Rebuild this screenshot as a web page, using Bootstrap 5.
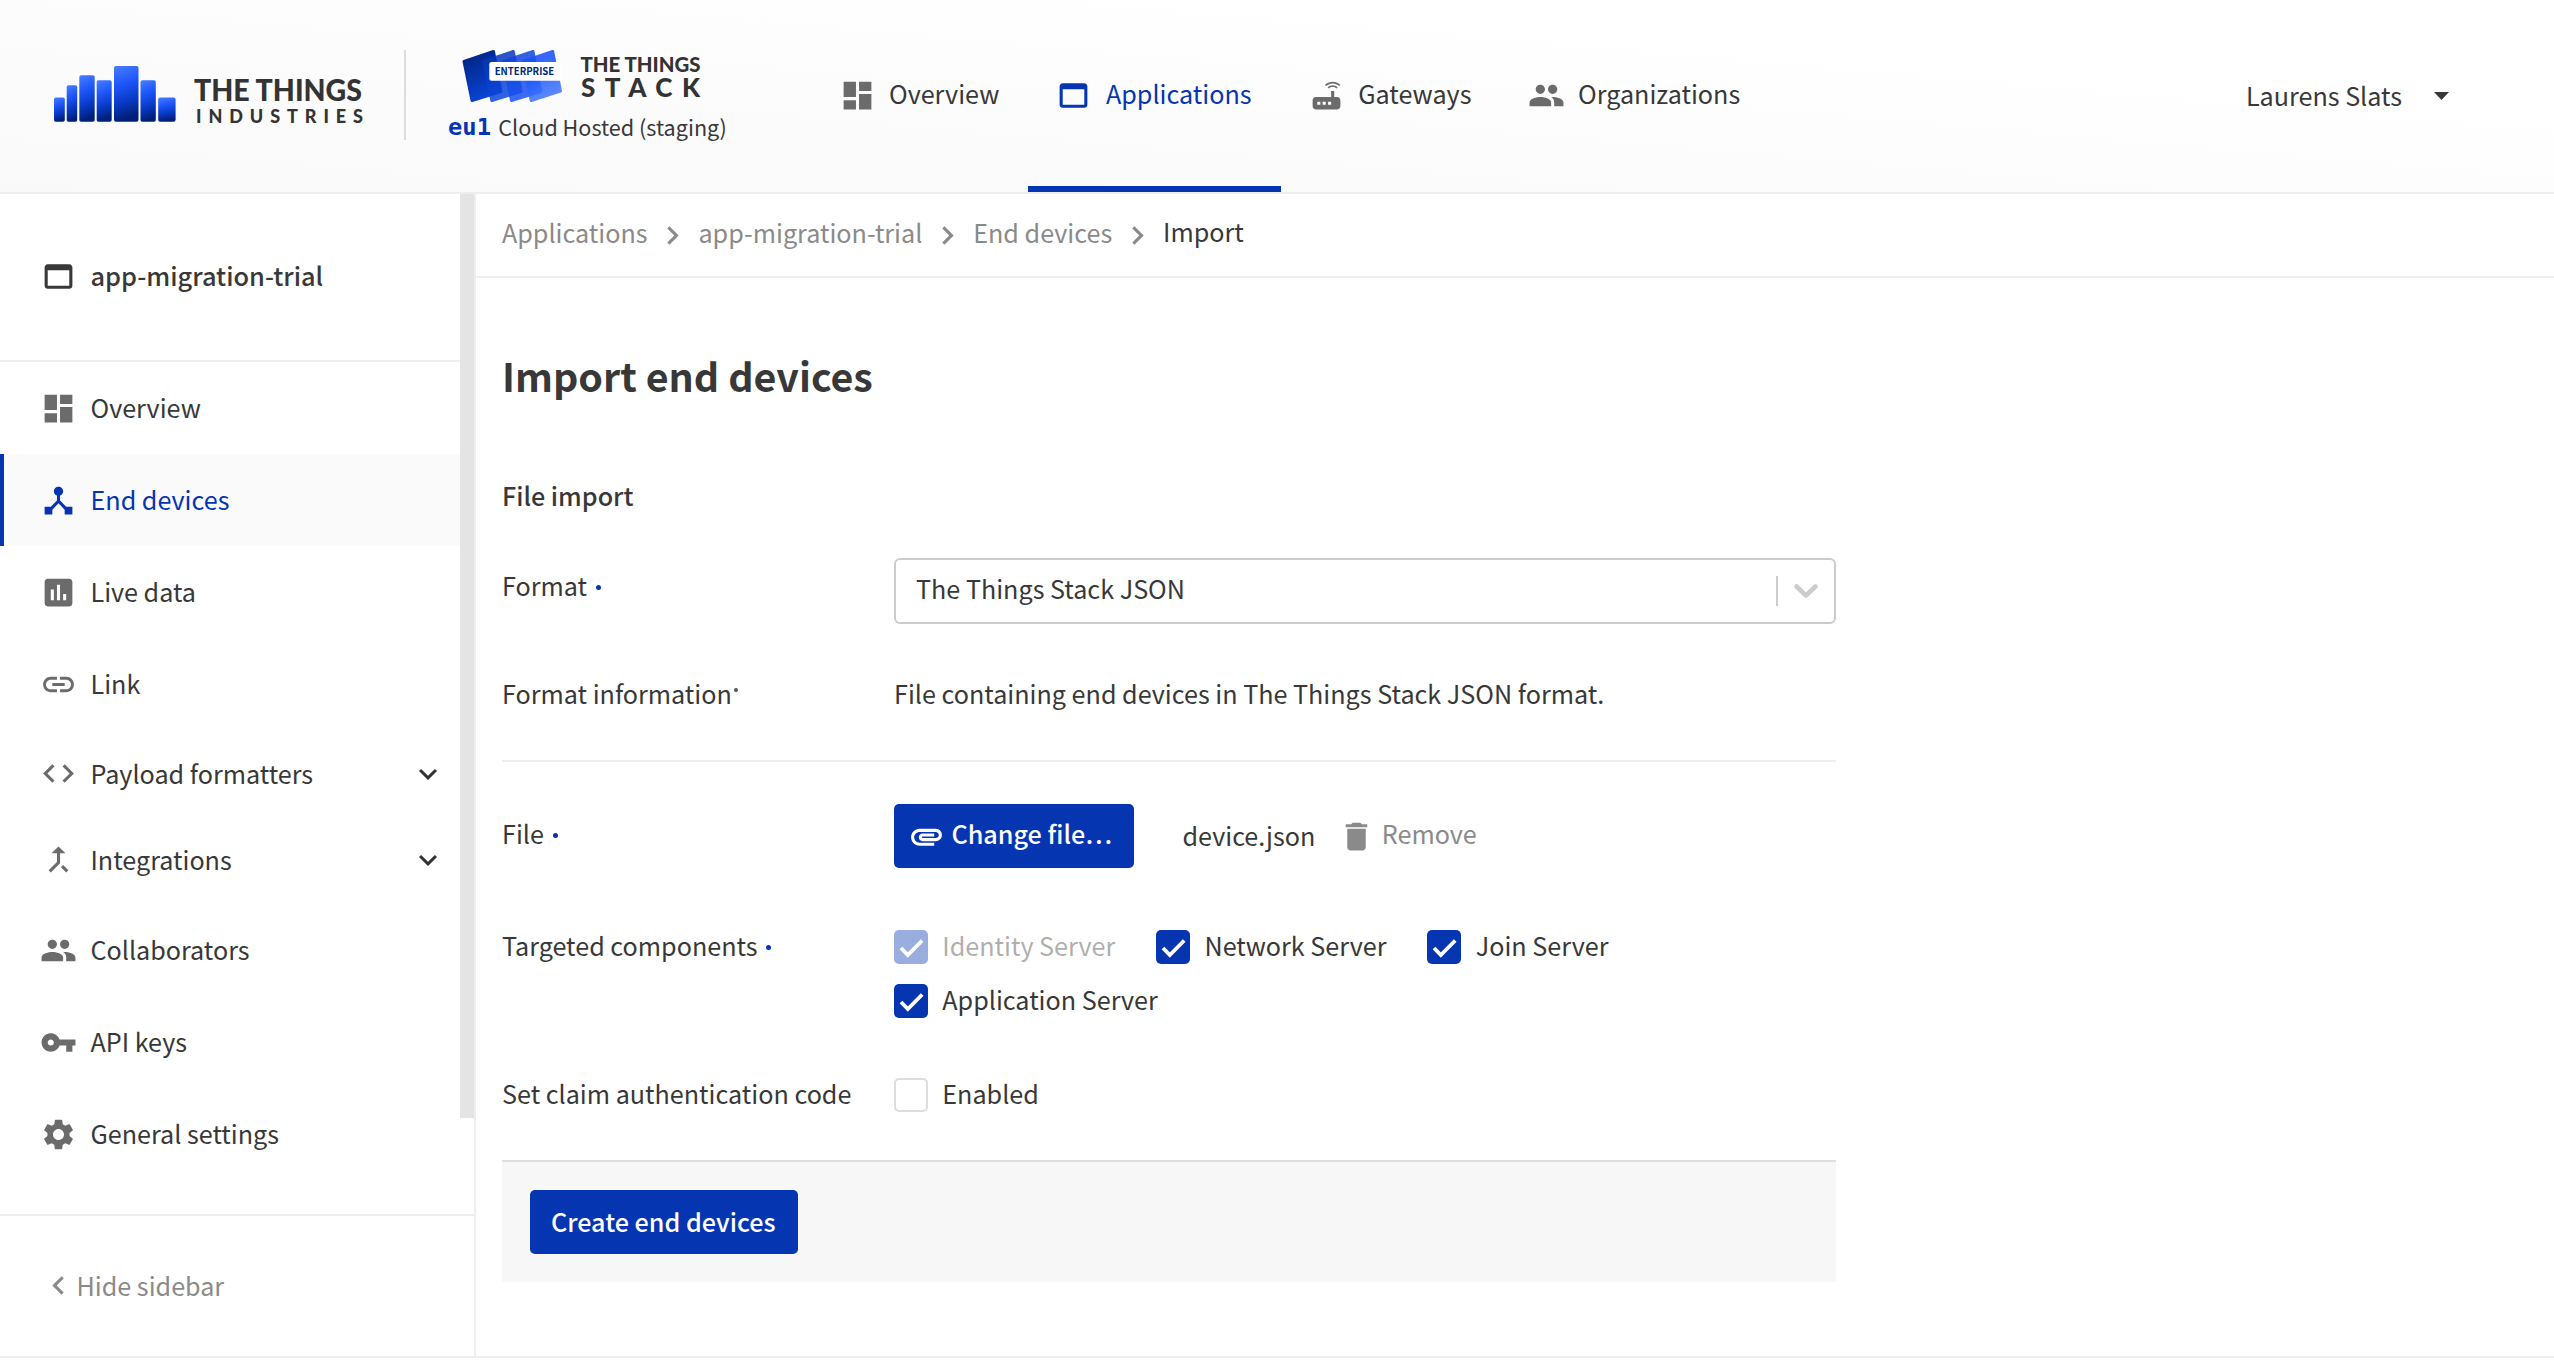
<!DOCTYPE html>
<html lang="en">
<head>
<meta charset="utf-8">
<meta name="viewport" content="width=device-width, initial-scale=1">
<title>Import end devices - The Things Stack</title>
<link rel="stylesheet" href="https://cdn.jsdelivr.net/npm/bootstrap@5.3.0/dist/css/bootstrap.min.css">
<style>
:root{--tts-blue:#0635b1;--tts-text:#383838;--tts-icon:#6b6b6b;--tts-mute:#8a8a8a;--tts-line:#eee}
body{font-family:"Noto Sans CJK SC","Noto Sans",sans-serif;font-size:25.15px;line-height:34px;color:var(--tts-text);background:#fff;height:1362px;overflow:hidden}
a{color:inherit;text-decoration:none}
.ico{width:37px;height:37px;fill:currentColor;flex:none;display:block}
.topbar{height:194px;border-bottom:2px solid var(--tts-line);background:linear-gradient(5deg,#f9f9f9,#fff 75%)}
.brand-industries{margin:0 0 2px 50px;width:356px;height:90px;border-right:2px solid #ddd}
.brand-stack{margin-left:39px;width:300px;height:104px}
.brand-stack .hosted{font-size:21.6px;line-height:30px;margin-top:8px;padding-left:3px}
.brand-stack .cluster{font:700 23.8px/30px "DejaVu Sans Mono",monospace;color:var(--tts-blue);margin-right:7.3px}
.logo-type{font-family:Lato,sans-serif;font-weight:900;fill:#333}
.main-nav{margin-left:66.5px}
.main-nav .nav-link{height:192px;padding:4px 29.2px 0 27px;gap:13.5px;color:var(--tts-text);border-bottom:6px solid transparent}
.main-nav .nav-link span{padding-bottom:4px}
.main-nav .ico{color:var(--tts-icon)}
.main-nav .active,.main-nav .active .ico{color:var(--tts-blue)}
.main-nav .nav-link.active{border-bottom-color:var(--tts-blue)}
.user-menu{margin-right:105px;gap:32px}
.user-menu span{padding-bottom:3px}
.shell{height:1164px;border-bottom:2px solid var(--tts-line)}
.side{width:476px;border-right:2px solid var(--tts-line)}
.side-body{height:1020px}
.side-title{height:168px;border-bottom:2px solid var(--tts-line);padding:0 0 2px 39.5px;gap:14px;font-weight:500;font-size:25.4px}
.side-title span{padding-bottom:2px}
.side-scroll{width:14px;height:924px;background:#e4e4e4}
.side .nav-link{height:92px;padding:0 23px 0 39.5px;gap:14px;color:var(--tts-text)}
.side .nav-link.fold{height:87px}
.side .nav-link.fold .caret{color:#333;margin-left:auto;width:36px;height:36px;margin-right:-9px}
.side .nav-link span{padding-bottom:3px}
.side .nav-link.fold span{padding-bottom:2px}
.side .nav-link.fold + .fold{padding-bottom:2px}
.side .ico{color:var(--tts-icon)}
.side .nav-link.active{background:#fafafa;color:var(--tts-blue);box-shadow:inset 4px 0 var(--tts-blue)}
.side .nav-link.active .ico{color:var(--tts-blue)}
.side .side-title .ico{color:var(--tts-text)}
.side-foot{height:142px;border-top:2px solid var(--tts-line);padding:0 0 1px 39.5px;color:var(--tts-mute)}
.side-foot span{padding-bottom:1px}
.side-foot .ico{color:var(--tts-mute)}
.crumbs{height:84px;border-bottom:2px solid var(--tts-line);padding-left:26px;color:var(--tts-mute)}
.crumbs span{padding-bottom:6px}
.crumbs .here{color:var(--tts-text);padding-bottom:8px}
.crumbs .ico{margin:0 7.4px 0 6.5px}
.content{margin-left:26px;width:1334px}
.content h1{font-size:39.4px;line-height:50px;font-weight:700;margin:72px 0 0}
.content h2{font-size:25.15px;line-height:34px;font-weight:500;margin:78px 0 0}
.frow-format{margin-top:46px}
.frow-format .flabel{padding-bottom:12px}
.frow-info{margin-top:52px}
.frow-file{margin-top:42px}
.frow-file .flabel{padding-bottom:6px}
.frow-targets{margin-top:62px}
.frow-claim{margin-top:60px}
.frow-targets .flabel,.frow-claim .flabel{margin-top:-2px;height:34px}
.flabel{width:392px;flex:none}
.req,.opt{display:inline-block;width:5px;height:5px;border-radius:50%;background:var(--tts-blue);vertical-align:6px;margin-left:9px}
.opt{width:4px;height:4px;background:#555;vertical-align:12px;margin-left:2px}
.picker{width:942px;height:66px;border:2px solid #ccc;border-radius:6px;padding:0 16px 0 20px}
.picker .value{padding-bottom:6px}
.picker .sep{width:2px;height:30px;background:#ccc;margin:0 16px 0 auto}
.rule{height:2px;background:var(--tts-line);margin-top:50px}
.btn-tts{background:var(--tts-blue);color:#fff;border:0;border-radius:5px;height:64px;font-size:25.15px;font-weight:500;line-height:34px;padding:0 21px;display:inline-flex;align-items:center}
.btn-tts:hover{background:var(--tts-blue);color:#fff}
.btn-tts span{padding-bottom:6px}
.btn-file{width:240px;padding-left:13.5px;gap:7px}
.btn-create{width:268px;padding-right:0}
.btn-create span{padding-bottom:3px}
.file-name{margin-left:48.5px;padding-bottom:2px}
.file-remove{margin-left:22.5px;gap:7px;color:var(--tts-mute)}
.file-remove span{padding-bottom:6px}
.checks{column-gap:41px;row-gap:20px}
.tick{display:flex;align-items:center;gap:14.3px;height:34px}
.tick i{width:34px;height:34px;border-radius:5px;background:var(--tts-blue);display:block}
.tick svg{display:block;width:34px;height:34px}
.tick span{padding-bottom:4px}
.tick.off{opacity:.4}
.tick .empty{background:#fff;border:2px solid #ddd}
.submit-bar{margin-top:48px;height:122px;background:#f7f7f7;border-top:2px solid #dedede;padding:28px}
</style>
</head>
<body>
<svg width="0" height="0" class="position-absolute">
<defs>
<symbol id="i-dash" viewBox="0 0 24 24"><path d="M3 13h8V3H3v10zm0 8h8v-6H3v6zm10 0h8V11h-8v10zm0-18v6h8V3h-8z"/></symbol>
<symbol id="i-app" viewBox="0 0 24 24"><path d="M19 4H5c-1.11 0-2 .9-2 2v12c0 1.1.89 2 2 2h14c1.1 0 2-.9 2-2V6c0-1.1-.89-2-2-2zm0 14H5V8h14v10z"/></symbol>
<symbol id="i-router" viewBox="0 0 24 24"><path d="M20.2 5.9l.8-.8C19.6 3.7 17.8 3 16 3s-3.6.7-5 2.1l.8.8C13 4.8 14.500 4.2 16 4.2s3 .6 4.200 1.700zm-.9.8c-.9-.9-2.100-1.400-3.300-1.400s-2.400.5-3.300 1.400l.8.8c.7-.7 1.600-1 2.500-1 .9 0 1.800.3 2.500 1l.8-.8zM19 13h-2V9h-2v4H5c-1.100 0-2 .9-2 2v4c0 1.100.9 2 2 2h14c1.100 0 2-.9 2-2v-4c0-1.100-.9-2-2-2zM8 18H6v-2h2v2zm3.500 0h-2v-2h2v2zm3.500 0h-2v-2h2v2z"/></symbol>
<symbol id="i-people" viewBox="0 0 24 24"><path d="M16 11c1.660 0 2.990-1.340 2.990-3S17.660 5 16 5c-1.660 0-3 1.340-3 3s1.340 3 3 3zm-8 0c1.660 0 2.990-1.340 2.990-3S9.660 5 8 5C6.340 5 5 6.340 5 8s1.340 3 3 3zm0 2c-2.330 0-7 1.170-7 3.500V19h14v-2.500c0-2.330-4.670-3.500-7-3.500zm8 0c-.29 0-.62.02-.97.05 1.160.84 1.970 1.970 1.970 3.450V19h6v-2.500c0-2.330-4.670-3.500-7-3.500z"/></symbol>
<symbol id="i-hub" viewBox="0 0 24 24"><path d="M17 16l-4-4V8.820C14.160 8.400 15 7.300 15 6c0-1.660-1.340-3-3-3S9 4.340 9 6c0 1.300.84 2.400 2 2.820V12l-4 4H3v5h5v-3.050l4-4.200 4 4.200V21h5v-5h-4z"/></symbol>
<symbol id="i-poll" viewBox="0 0 24 24"><path d="M19 3H5c-1.100 0-2 .9-2 2v14c0 1.100.9 2 2 2h14c1.100 0 2-.9 2-2V5c0-1.100-.9-2-2-2zM9 17H7v-7h2v7zm4 0h-2V7h2v10zm4 0h-2v-4h2v4z"/></symbol>
<symbol id="i-link" viewBox="0 0 24 24"><path d="M3.900 12c0-1.710 1.390-3.100 3.100-3.100h4V7H7c-2.760 0-5 2.240-5 5s2.240 5 5 5h4v-1.900H7c-1.710 0-3.100-1.390-3.100-3.100zM8 13h8v-2H8v2zm9-6h-4v1.900h4c1.710 0 3.100 1.390 3.100 3.100s-1.390 3.100-3.100 3.100h-4V17h4c2.760 0 5-2.240 5-5s-2.240-5-5-5z"/></symbol>
<symbol id="i-code" viewBox="0 0 24 24"><path d="M9.400 16.600L4.800 12l4.600-4.600L8 6l-6 6 6 6 1.400-1.400zm5.200 0l4.600-4.600-4.600-4.600L16 6l6 6-6 6-1.400-1.400z"/></symbol>
<symbol id="i-merge" viewBox="0 0 24 24"><path d="M17 20.410L18.410 19 15 15.590 13.590 17 17 20.410zM7.500 8H11v5.590L5.590 19 7 20.410l6-6V8h3.500L12 3.500 7.500 8z"/></symbol>
<symbol id="i-key" viewBox="0 0 24 24"><path d="M12.650 10C11.830 7.670 9.610 6 7 6c-3.310 0-6 2.690-6 6s2.690 6 6 6c2.610 0 4.830-1.670 5.650-4H17v4h4v-4h2v-4H12.650zM7 14c-1.100 0-2-.9-2-2s.9-2 2-2 2 .9 2 2-.9 2-2 2z"/></symbol>
<symbol id="i-gear" viewBox="0 0 24 24"><path d="M19.140 12.940c.04-.3.060-.61.060-.94 0-.32-.02-.64-.07-.94l2.030-1.580c.18-.14.230-.41.120-.61l-1.920-3.320c-.12-.22-.37-.29-.59-.22l-2.390.96c-.5-.38-1.030-.7-1.620-.94l-.36-2.540c-.04-.24-.24-.41-.48-.41h-3.840c-.24 0-.43.17-.47.41l-.36 2.540c-.59.24-1.130.57-1.620.94l-2.390-.96c-.22-.08-.47 0-.59.220L2.740 8.870c-.12.21-.08.470.12.610l2.030 1.580c-.05.3-.09.630-.09.940s.02.640.07.940l-2.030 1.580c-.18.140-.23.410-.12.610l1.920 3.320c.12.220.37.290.59.220l2.390-.96c.5.380 1.030.7 1.620.940l.36 2.540c.05.240.24.410.48.410h3.840c.24 0 .44-.17.470-.41l.36-2.540c.59-.24 1.130-.56 1.620-.94l2.390.96c.22.080.47 0 .59-.22l1.920-3.320c.12-.22.070-.47-.12-.61l-2.010-1.580zM12 15.600c-1.980 0-3.600-1.620-3.600-3.600s1.620-3.600 3.600-3.600 3.600 1.620 3.600 3.600-1.620 3.600-3.600 3.600z"/></symbol>
<symbol id="i-down" viewBox="0 0 24 24"><path d="M7.410 8.590L12 13.170l4.590-4.580L18 10l-6 6-6-6 1.410-1.410z"/></symbol>
<symbol id="i-left" viewBox="0 0 24 24"><path d="M15.410 7.410L14 6l-6 6 6 6 1.410-1.410L10.830 12z"/></symbol>
<symbol id="i-right" viewBox="0 0 24 24"><path d="M10 6L8.590 7.410 13.170 12l-4.580 4.590L10 18l6-6z"/></symbol>
<symbol id="i-clip" viewBox="0 0 24 24"><path d="M2 12.500C2 9.460 4.460 7 7.500 7H18c2.210 0 4 1.790 4 4s-1.790 4-4 4H9.500C8.120 15 7 13.880 7 12.500S8.120 10 9.500 10H17v2H9.410c-.55 0-.55 1 0 1H18c1.100 0 2-.9 2-2s-.9-2-2-2H7.500C5.570 9 4 10.570 4 12.500S5.570 16 7.500 16H17v2H7.500C4.460 18 2 15.540 2 12.500z"/></symbol>
<symbol id="i-trash" viewBox="0 0 24 24"><path d="M6 19c0 1.100.9 2 2 2h8c1.100 0 2-.9 2-2V7H6v12zM19 4h-3.500l-1-1h-5l-1 1H5v2h14V4z"/></symbol>
<symbol id="i-check" viewBox="0 0 34 34"><path d="M7 18l6.800 7L28.200 10.500" fill="none" stroke="#fff" stroke-width="3.800"/></symbol>
<linearGradient id="bar" x1="0" y1="0" x2="0.150" y2="1"><stop offset="0" stop-color="#4a7dff"/><stop offset=".35" stop-color="#1f57fb"/><stop offset=".7" stop-color="#0839c4"/><stop offset="1" stop-color="#001f78"/></linearGradient>
<linearGradient id="c1" x1=".2" y1="0" x2=".6" y2="1"><stop offset="0" stop-color="#00237e"/><stop offset="1" stop-color="#0a46dd"/></linearGradient>
<linearGradient id="c2" x1=".2" y1="0" x2=".6" y2="1"><stop offset="0" stop-color="#0635b4"/><stop offset="1" stop-color="#0f49e6"/></linearGradient>
<linearGradient id="c3" x1=".2" y1="0" x2=".6" y2="1"><stop offset="0" stop-color="#0d43d8"/><stop offset="1" stop-color="#1d54f4"/></linearGradient>
<linearGradient id="c4" x1=".2" y1="0" x2=".6" y2="1"><stop offset="0" stop-color="#1550f5"/><stop offset=".5" stop-color="#1f59ff"/><stop offset="1" stop-color="#4a7cff"/></linearGradient>
</defs>
</svg>

<header class="topbar d-flex align-items-center">
  <a href="#" class="brand-industries d-block">
    <svg class="d-block" width="340" height="90" viewBox="50 50 340 90">
      <g fill="url(#bar)">
        <rect x="54" y="97.500" width="10.800" height="24.300" rx="1.800"/><rect x="66.700" y="85.300" width="10.500" height="36.500" rx="1.800"/><rect x="79.300" y="75.300" width="15.400" height="46.500" rx="1.800"/><rect x="96.700" y="80.300" width="15" height="41.500" rx="1.800"/><rect x="114" y="66" width="24.500" height="55.800" rx="2"/><rect x="140.500" y="80.300" width="15.300" height="41.500" rx="1.800"/><rect x="158.200" y="97.500" width="17.400" height="24.300" rx="2"/>
      </g>
      <text class="logo-type" x="194" y="101.300" font-size="30" textLength="168" lengthAdjust="spacingAndGlyphs">THE THINGS</text>
      <text class="logo-type" x="196" y="122.600" font-size="18" textLength="167" lengthAdjust="spacing">INDUSTRIES</text>
    </svg>
  </a>
  <a href="#" class="brand-stack d-block">
    <svg class="d-block" width="300" height="60" viewBox="445 44 300 60">
      <g stroke-width="3" stroke-linejoin="round">
        <path d="M464 61.500L493.500 51.500L501 91.500L472 100.500Z" fill="url(#c1)" stroke="url(#c1)"/>
        <path d="M483.700 61.500L513.300 51.500L521 91.500L491.800 100.500Z" fill="url(#c2)" stroke="url(#c2)" opacity=".85"/>
        <path d="M503.400 61.500L533 51.500L540.700 91.500L511.500 100.500Z" fill="url(#c3)" stroke="url(#c3)" opacity=".85"/>
        <path d="M523.200 61.500L552.700 51.500L560.500 91L531.200 100.500Z" fill="url(#c4)" stroke="url(#c4)" opacity=".88"/>
      </g>
      <path d="M491.500 62H562V80.700H491.500Q489.300 80.700 489.300 78.500V64.200Q489.300 62 491.500 62Z" fill="#fff"/>
      <text x="494.700" y="75.300" font-family="Noto Sans CJK SC, sans-serif" font-weight="700" font-size="10.300" fill="#00267f" textLength="59.500" lengthAdjust="spacingAndGlyphs">ENTERPRISE</text>
      <text class="logo-type" x="580.500" y="71.600" font-size="21" textLength="120" lengthAdjust="spacingAndGlyphs">THE THINGS</text>
      <text class="logo-type" x="581" y="96.500" font-size="26" textLength="119" lengthAdjust="spacing">STACK</text>
    </svg>
    <div class="hosted d-flex"><span class="cluster">eu1</span><span>Cloud Hosted (staging)</span></div>
  </a>
  <nav class="main-nav nav flex-nowrap">
    <a class="nav-link d-flex align-items-center" href="#"><svg class="ico"><use href="#i-dash"/></svg><span>Overview</span></a>
    <a class="nav-link d-flex align-items-center active" href="#"><svg class="ico"><use href="#i-app"/></svg><span>Applications</span></a>
    <a class="nav-link d-flex align-items-center" href="#"><svg class="ico"><use href="#i-router"/></svg><span>Gateways</span></a>
    <a class="nav-link d-flex align-items-center" href="#"><svg class="ico"><use href="#i-people"/></svg><span>Organizations</span></a>
  </nav>
  <div class="user-menu d-flex align-items-center ms-auto"><span>Laurens Slats</span><svg width="15" height="8"><path d="M0 0h15L7.500 8z" fill="#383838"/></svg></div>
</header>

<div class="shell d-flex">
  <aside class="side flex-shrink-0">
    <div class="side-body d-flex">
      <div class="flex-grow-1">
        <div class="side-title d-flex align-items-center"><svg class="ico"><use href="#i-app"/></svg><span>app-migration-trial</span></div>
        <nav class="nav flex-column">
          <a class="nav-link d-flex align-items-center" href="#"><svg class="ico"><use href="#i-dash"/></svg><span>Overview</span></a>
          <a class="nav-link d-flex align-items-center active" href="#"><svg class="ico"><use href="#i-hub"/></svg><span>End devices</span></a>
          <a class="nav-link d-flex align-items-center" href="#"><svg class="ico"><use href="#i-poll"/></svg><span>Live data</span></a>
          <a class="nav-link d-flex align-items-center" href="#"><svg class="ico"><use href="#i-link"/></svg><span>Link</span></a>
          <a class="nav-link fold d-flex align-items-center" href="#"><svg class="ico"><use href="#i-code"/></svg><span>Payload formatters</span><svg class="ico caret"><use href="#i-down"/></svg></a>
          <a class="nav-link fold d-flex align-items-center" href="#"><svg class="ico"><use href="#i-merge"/></svg><span>Integrations</span><svg class="ico caret"><use href="#i-down"/></svg></a>
          <a class="nav-link d-flex align-items-center" href="#"><svg class="ico"><use href="#i-people"/></svg><span>Collaborators</span></a>
          <a class="nav-link d-flex align-items-center" href="#"><svg class="ico"><use href="#i-key"/></svg><span>API keys</span></a>
          <a class="nav-link d-flex align-items-center" href="#"><svg class="ico"><use href="#i-gear"/></svg><span>General settings</span></a>
        </nav>
      </div>
      <div class="side-scroll"></div>
    </div>
    <div class="side-foot d-flex align-items-center"><svg class="ico"><use href="#i-left"/></svg><span>Hide sidebar</span></div>
  </aside>

  <main class="flex-grow-1">
    <nav class="crumbs d-flex align-items-center">
      <span>Applications</span><svg class="ico"><use href="#i-right"/></svg>
      <span>app-migration-trial</span><svg class="ico"><use href="#i-right"/></svg>
      <span>End devices</span><svg class="ico"><use href="#i-right"/></svg>
      <span class="here">Import</span>
    </nav>
    <form class="content">
      <h1>Import end devices</h1>
      <h2>File import</h2>

      <div class="frow-format d-flex align-items-center">
        <div class="flabel">Format<span class="req"></span></div>
        <div class="picker d-flex align-items-center">
          <span class="value">The Things Stack JSON</span><span class="sep"></span>
          <svg width="24" height="15" viewBox="0 0 24 15"><path d="M2.500 2.500L12 11.500L21.500 2.500" fill="none" stroke="#ccc" stroke-width="4.500" stroke-linecap="round" stroke-linejoin="round"/></svg>
        </div>
      </div>

      <div class="frow-info d-flex">
        <div class="flabel">Format information<span class="opt"></span></div>
        <div>File containing end devices in The Things Stack JSON format.</div>
      </div>
      <div class="rule"></div>

      <div class="frow-file d-flex align-items-center">
        <div class="flabel">File<span class="req"></span></div>
        <button type="button" class="btn btn-tts btn-file"><svg class="ico"><use href="#i-clip"/></svg><span>Change file…</span></button>
        <span class="file-name">device.json</span>
        <a href="#" class="file-remove d-flex align-items-center"><svg class="ico"><use href="#i-trash"/></svg><span>Remove</span></a>
      </div>

      <div class="frow-targets d-flex">
        <div class="flabel">Targeted components<span class="req"></span></div>
        <div class="checks d-flex flex-wrap">
          <label class="tick off"><i><svg><use href="#i-check"/></svg></i><span>Identity Server</span></label>
          <label class="tick"><i><svg><use href="#i-check"/></svg></i><span>Network Server</span></label>
          <label class="tick"><i><svg><use href="#i-check"/></svg></i><span>Join Server</span></label>
          <label class="tick"><i><svg><use href="#i-check"/></svg></i><span>Application Server</span></label>
        </div>
      </div>

      <div class="frow-claim d-flex">
        <div class="flabel">Set claim authentication code</div>
        <label class="tick"><i class="empty"></i><span>Enabled</span></label>
      </div>

      <div class="submit-bar"><button type="button" class="btn btn-tts btn-create"><span>Create end devices</span></button></div>
    </form>
  </main>
</div>
<script src="https://cdn.jsdelivr.net/npm/bootstrap@5.3.0/dist/js/bootstrap.bundle.min.js"></script>
</body>
</html>
